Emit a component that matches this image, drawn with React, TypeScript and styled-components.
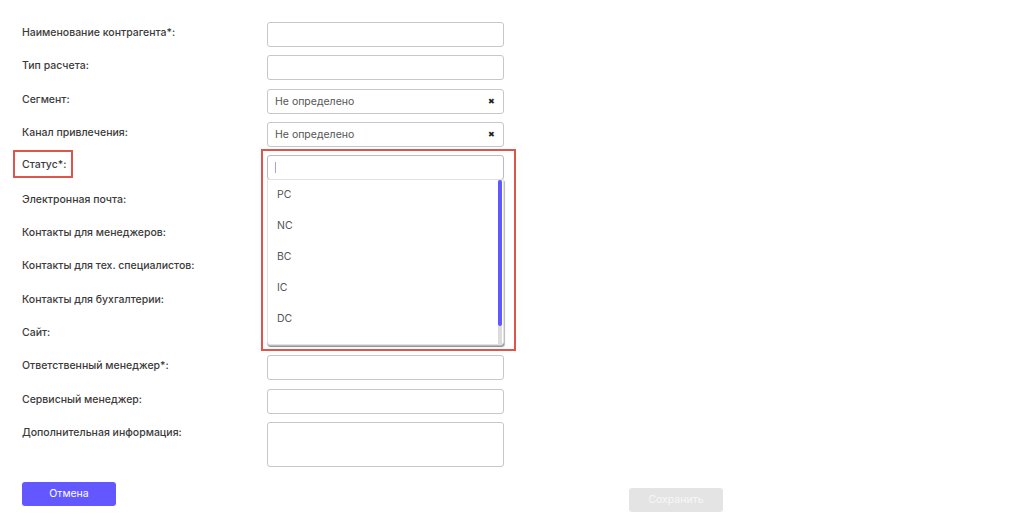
import styled, { createGlobalStyle } from "styled-components"

const fields = [
  { label: "Наименование контрагента*:" },
  { label: "Тип расчета:" },
  { label: "Сегмент:", value: "Не определено", clear: true },
  { label: "Канал привлечения:", value: "Не определено", clear: true },
  { label: "Статус*:", status: true },
  { label: "Электронная почта:" },
  { label: "Контакты для менеджеров:" },
  { label: "Контакты для тех. специалистов:" },
  { label: "Контакты для бухгалтерии:" },
  { label: "Сайт:" },
  { label: "Ответственный менеджер*:" },
  { label: "Сервисный менеджер:" },
  { label: "Дополнительная информация:", area: true },
]

const statuses = ["PC", "NC", "BC", "IC", "DC"]

export default function App() {
  return (
    <>
      <Global />
      <Page>
        <Form>
          {fields.map((f) => (
            <Row key={f.label}>
              {f.status ? (
                <MarkedLabel>{f.label}</MarkedLabel>
              ) : (
                <Label>{f.label}</Label>
              )}
              <Cell>
                {f.area ? (
                  <Area />
                ) : (
                  <Input $focused={f.status}>
                    {f.value && <Value>{f.value}</Value>}
                    {f.status && <Caret />}
                    {f.clear && <Clear>✖</Clear>}
                  </Input>
                )}
                {f.status && (
                  <>
                    <Menu>
                      {statuses.map((s) => (
                        <Option key={s}>{s}</Option>
                      ))}
                      <Track>
                        <Thumb />
                      </Track>
                    </Menu>
                    <Callout />
                  </>
                )}
              </Cell>
            </Row>
          ))}
        </Form>
        <Footer>
          <PrimaryButton>Отмена</PrimaryButton>
          <DisabledButton>Сохранить</DisabledButton>
        </Footer>
      </Page>
    </>
  )
}

//style

const Global = createGlobalStyle`
  body {
    margin: 0;
    background: #fff;
    font-family: Inter, "Noto Sans", sans-serif;
  }
`

const Page = styled.div`
  width: 1024px;
  height: 524px;
  padding: 22px 0 0 22px;
  box-sizing: border-box;
`
const Form = styled.div`
  display: flex;
  flex-direction: column;
  gap: 8.33px;
`
const Row = styled.div`
  display: grid;
  grid-template-columns: 245px 237px;
  align-items: start;
`
const Label = styled.div`
  font-size: 10.5px;
  line-height: 14px;
  padding-top: 4px;
  font-weight: 500;
  color: #3b3b3b;
`
const MarkedLabel = styled(Label)`
  justify-self: start;
  margin: -5px 0 0 -9px;
  padding: 6px 5px 4px 7px;
  border: 2px solid #e0554b;
`
const Cell = styled.div`
  position: relative;
`
const Input = styled.div<{ $focused?: boolean }>`
  height: 25px;
  box-sizing: border-box;
  border: 1px solid ${(p) => (p.$focused ? "#b9bac4" : "#c6c6cc")};
  border-radius: 3px;
  display: flex;
  align-items: center;
  padding: 0 8px 0 7px;
  background: #fff;
`
const Value = styled.span`
  flex: 1;
  font-size: 10.5px;
  color: #555;
`
const Clear = styled.span`
  font-size: 8px;
  color: #222;
`
const Caret = styled.span`
  width: 1px;
  height: 11px;
  background: #9ea3ec;
`
const Area = styled.div`
  height: 45px;
  box-sizing: border-box;
  border: 1px solid #c6c6cc;
  border-radius: 3px;
`
const Menu = styled.div`
  position: absolute;
  top: 24px;
  left: 0;
  width: 237px;
  height: 166px;
  box-sizing: border-box;
  background: #fff;
  border: 1px solid #e2e2e6;
  border-radius: 0 0 3px 3px;
  box-shadow: 1px 2px 1px rgba(0, 0, 0, 0.28);
  z-index: 2;
`
const Option = styled.div`
  height: 30.8px;
  line-height: 30.8px;
  padding-left: 9px;
  font-size: 10.5px;
  color: #555;
`
const Track = styled.div`
  position: absolute;
  top: 0;
  right: 1px;
  bottom: 0;
  width: 4px;
  background: #dcdcdc;
`
const Thumb = styled.div`
  height: 146px;
  background: #5f57ff;
  border-radius: 2px;
`
const Callout = styled.div`
  position: absolute;
  top: -6px;
  left: -6px;
  right: -12px;
  height: 202px;
  box-sizing: border-box;
  border: 2px solid #e0554b;
  z-index: 3;
  pointer-events: none;
`
const Footer = styled.div`
  display: flex;
  align-items: flex-start;
  width: 701px;
  justify-content: space-between;
  margin-top: 15px;
`
const Button = styled.div`
  width: 94px;
  height: 24px;
  border-radius: 3px;
  display: flex;
  align-items: center;
  justify-content: center;
  font-size: 10.5px;
`
const PrimaryButton = styled(Button)`
  background: #6358ff;
  color: #fff;
`
const DisabledButton = styled(Button)`
  margin-top: 6px;
  background: #e4e4e4;
  color: #f7f7f7;
`
